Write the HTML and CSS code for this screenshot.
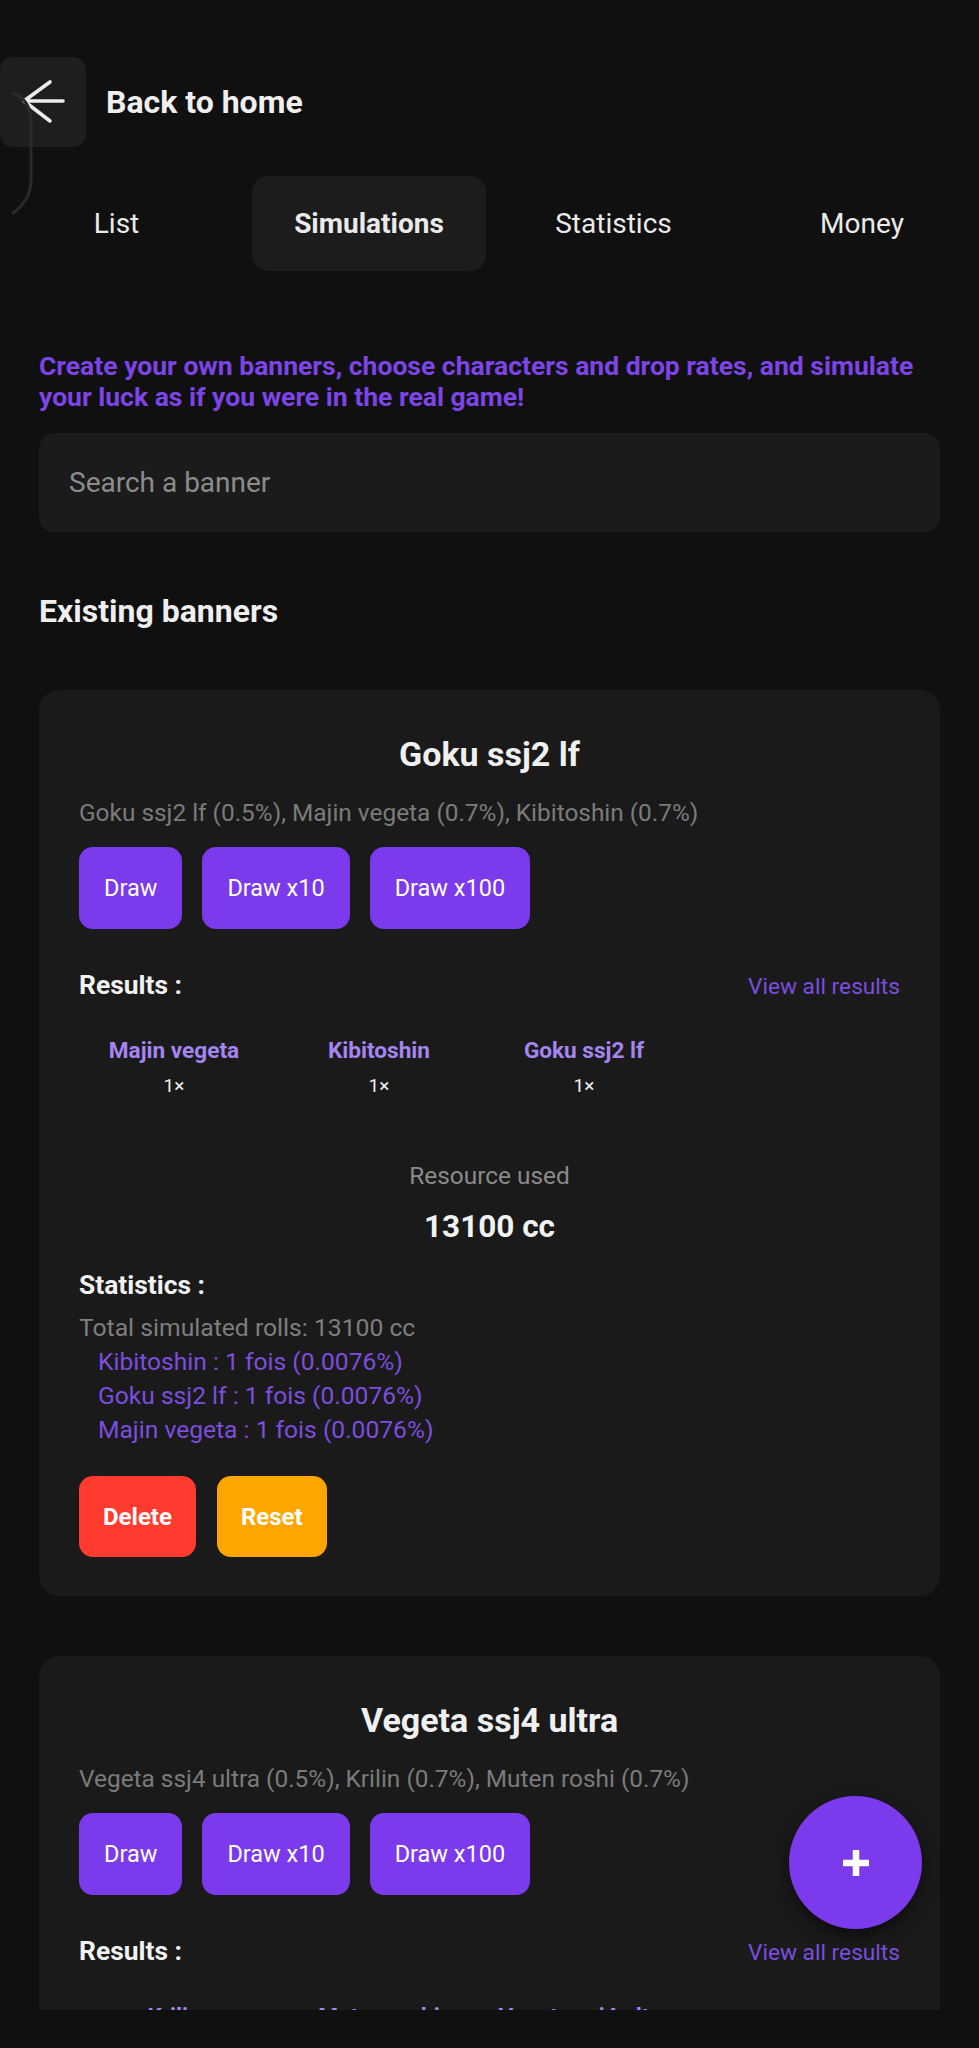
FILE: index.html
```html
<!DOCTYPE html>
<html lang="en">
<head>
<meta charset="utf-8">
<title>Simulations</title>
<link rel="stylesheet" href="styles.css">
</head>
<body>
<div class="app">
  <div class="scroll">
    <svg class="edge" width="40" height="230" viewBox="0 0 40 230"><path d="M13 93 Q31 100 31 122 V180 Q31 200 13 213" fill="none" stroke="#2a2a2a" stroke-width="3" stroke-linecap="round"/></svg>
    <header class="header">
      <div class="back-btn">
        <svg width="86" height="90" viewBox="0 0 86 90"><path d="M63 44 H24 M50 25 L24 44 L50 64" fill="none" stroke="#ececec" stroke-width="3.6" stroke-linecap="round" stroke-linejoin="round"/></svg>
      </div>
      <span class="back-label">Back to home</span>
    </header>

    <nav class="tabs">
      <div class="tab">List</div>
      <div class="tab active">Simulations</div>
      <div class="tab">Statistics</div>
      <div class="tab">Money</div>
    </nav>

    <main class="content">
      <p class="intro">Create your own banners, choose characters and drop rates, and simulate your luck as if you were in the real game!</p>
      <div class="search">Search a banner</div>
      <h2 class="section-title">Existing banners</h2>

      <section class="card">
        <h3 class="card-title">Goku ssj2 lf</h3>
        <p class="rates">Goku ssj2 lf (0.5%), Majin vegeta (0.7%), Kibitoshin (0.7%)</p>
        <div class="btn-row">
          <span class="btn draw">Draw</span>
          <span class="btn draw">Draw x10</span>
          <span class="btn draw">Draw x100</span>
        </div>
        <div class="results-head">
          <span class="label">Results :</span>
          <span class="link">View all results</span>
        </div>
        <div class="results">
          <div class="result"><span class="r-name">Majin vegeta</span><span class="r-count">1×</span></div>
          <div class="result"><span class="r-name">Kibitoshin</span><span class="r-count">1×</span></div>
          <div class="result"><span class="r-name">Goku ssj2 lf</span><span class="r-count">1×</span></div>
        </div>
        <p class="res-label">Resource used</p>
        <p class="res-value">13100 cc</p>
        <p class="label stats-title">Statistics :</p>
        <p class="total">Total simulated rolls: 13100 cc</p>
        <ul class="stat-list">
          <li>Kibitoshin : 1 fois (0.0076%)</li>
          <li>Goku ssj2 lf : 1 fois (0.0076%)</li>
          <li>Majin vegeta : 1 fois (0.0076%)</li>
        </ul>
        <div class="btn-row actions">
          <span class="btn delete">Delete</span>
          <span class="btn reset">Reset</span>
        </div>
      </section>

      <section class="card">
        <h3 class="card-title">Vegeta ssj4 ultra</h3>
        <p class="rates">Vegeta ssj4 ultra (0.5%), Krilin (0.7%), Muten roshi (0.7%)</p>
        <div class="btn-row">
          <span class="btn draw">Draw</span>
          <span class="btn draw">Draw x10</span>
          <span class="btn draw">Draw x100</span>
        </div>
        <div class="results-head">
          <span class="label">Results :</span>
          <span class="link">View all results</span>
        </div>
        <div class="results">
          <div class="result"><span class="r-name">Krilin</span><span class="r-count">1×</span></div>
          <div class="result"><span class="r-name">Muten roshi</span><span class="r-count">1×</span></div>
          <div class="result"><span class="r-name">Vegeta ssj4 ultra</span><span class="r-count">1×</span></div>
        </div>
        <p class="res-label">Resource used</p>
        <p class="res-value">300 cc</p>
      </section>
    </main>

    <button class="fab" aria-label="Add banner">
      <svg width="30" height="30" viewBox="0 0 30 30"><path d="M15 2 V28 M2 15 H28" stroke="#ffffff" stroke-width="6.5"/></svg>
    </button>
  </div>
  <div class="navbar"></div>
</div>
</body>
</html>
```

FILE: styles.css
```css
* { box-sizing: border-box; }

html, body {
  margin: 0;
  padding: 0;
  background: #101010;
}

body {
  font-family: Roboto, "Noto Sans", "Liberation Sans", sans-serif;
  color: #ececec;
}

.app {
  width: 979px;
  height: 2048px;
  display: flex;
  flex-direction: column;
}

.scroll {
  position: relative;
  height: 2010px;
  overflow: hidden;
  flex: none;
}

.navbar {
  flex: 1;
  background: #101010;
}

.edge {
  position: absolute;
  left: 0;
  top: 0;
}

.header {
  display: flex;
  align-items: center;
  gap: 20px;
  margin-top: 57px;
}

.back-btn {
  width: 86px;
  height: 90px;
  border-radius: 13px;
  background: rgba(40, 40, 40, 0.6);
  display: flex;
}

.back-label {
  font-size: 32px;
  line-height: 38px;
  font-weight: 700;
  color: #efefef;
}

.tabs {
  margin-top: 29px;
  display: grid;
  grid-template-columns: 233px 234px 233px 234px;
  justify-content: space-between;
}

.tab {
  height: 95px;
  display: flex;
  align-items: center;
  justify-content: center;
  font-size: 28px;
  color: #eaeaea;
  border-radius: 16px;
}

.tab.active {
  background: #1c1c1c;
  font-weight: 700;
  margin-left: 4px;
  margin-right: -4px;
}

.content {
  padding: 0 39px;
}

.intro {
  margin: 79px 0 0;
  font-size: 26.5px;
  line-height: 31px;
  font-weight: 700;
  color: #7d44e6;
}

.search {
  margin-top: 21px;
  height: 99px;
  border-radius: 15px;
  background: #1b1b1b;
  display: flex;
  align-items: center;
  padding-left: 30px;
  font-size: 28px;
  color: #8c8c8c;
}

.section-title {
  margin: 62px 0 0;
  font-size: 32px;
  line-height: 35px;
  font-weight: 700;
  color: #efefef;
}

.card {
  margin-top: 61px;
  background: #1a1a1a;
  border-radius: 20px;
  padding: 46px 40px 39px;
}

.card + .card {
  margin-top: 60px;
}

.card-title {
  margin: 0;
  text-align: center;
  font-size: 34px;
  line-height: 36px;
  font-weight: 700;
  color: #f0f0f0;
}

.rates {
  margin: 27px 0 0;
  font-size: 24.4px;
  line-height: 28px;
  color: #7b7b7b;
}

.btn-row {
  display: flex;
  gap: 20px;
  margin-top: 20px;
}

.btn {
  height: 82px;
  padding: 0 25px;
  border-radius: 14px;
  display: flex;
  align-items: center;
  font-size: 23.5px;
  color: #ffffff;
}

.draw {
  background: #7c3aed;
}

.results-head {
  margin-top: 41px;
  display: flex;
  justify-content: space-between;
  align-items: baseline;
}

.label {
  font-size: 26.4px;
  line-height: 30px;
  font-weight: 700;
  color: #f2f2f2;
}

.link {
  font-size: 22.7px;
  line-height: 30px;
  color: #7c4ddf;
}

.results {
  margin-top: 36px;
  display: flex;
  gap: 15px;
}

.result {
  width: 190px;
  display: flex;
  flex-direction: column;
  align-items: center;
}

.r-name {
  font-size: 22.6px;
  line-height: 26px;
  font-weight: 700;
  color: #a585f0;
}

.r-count {
  margin-top: 11px;
  font-size: 19px;
  line-height: 22px;
  color: #eeeeee;
}

.res-label {
  margin: 65px 0 0;
  text-align: center;
  font-size: 24.4px;
  line-height: 28px;
  color: #8a8a8a;
}

.res-value {
  margin: 19px 0 0;
  text-align: center;
  font-size: 31.5px;
  line-height: 36px;
  font-weight: 700;
  color: #f2f2f2;
}

.stats-title {
  margin: 25px 0 0;
}

.total {
  margin: 14px 0 0;
  font-size: 24.7px;
  line-height: 28px;
  color: #7e7e7e;
}

.stat-list {
  list-style: none;
  margin: 3px 0 0;
  padding: 0 0 0 19px;
}

.stat-list li {
  font-size: 24.6px;
  line-height: 34px;
  color: #7c4ddf;
}

.actions {
  margin-top: 29px;
  gap: 21px;
}

.actions .btn {
  height: 81px;
  font-weight: 700;
  font-size: 24px;
  padding: 0 24px;
}

.delete {
  background: #ff3b30;
}

.reset {
  background: #ffa500;
}

.fab {
  position: absolute;
  left: 789px;
  top: 1796px;
  width: 133px;
  height: 133px;
  border: none;
  border-radius: 50%;
  background: #7c3aed;
  display: flex;
  align-items: center;
  justify-content: center;
  box-shadow: 0 6px 16px rgba(0, 0, 0, 0.55);
  padding: 0;
}
```
